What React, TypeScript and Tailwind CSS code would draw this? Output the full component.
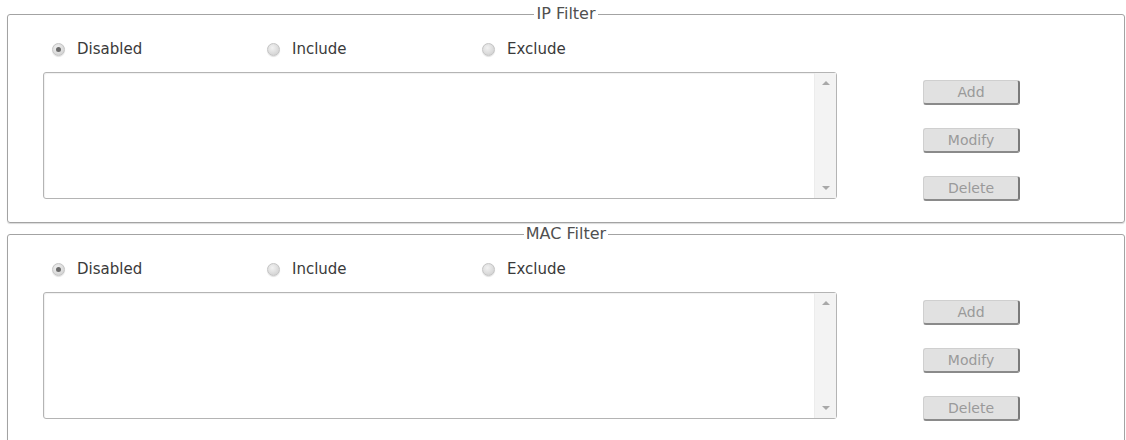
import React from 'react'

type Mode = 'disabled' | 'include' | 'exclude'

interface FilterBoxProps {
    title: string;
    mode: Mode;
    className?: string;
}

const modes: { value: Mode; label: string }[] = [
    { value: 'disabled', label: 'Disabled' },
    { value: 'include', label: 'Include' },
    { value: 'exclude', label: 'Exclude' },
];

function Radio({ checked }: { checked: boolean }) {
    return (
        <span className="w-[13px] h-[13px] rounded-full border border-[#c4c4c4] bg-[radial-gradient(circle_at_40%_35%,#f2f2f2,#cbcbcb)] shadow-[0_1px_1px_rgba(0,0,0,0.12)] flex items-center justify-center shrink-0">
            {checked && <span className="w-[5px] h-[5px] rounded-full bg-[#6a6a6a]" />}
        </span>
    );
}

function ListBox() {
    return (
        <div className="w-[794px] h-[127px] border border-[#b4b4b4] rounded-[3px] bg-white flex justify-end shadow-[inset_1px_1px_1px_rgba(0,0,0,0.06)]">
            <div className="w-[22px] h-full bg-[#f3f3f3] border-l border-[#ececec] flex flex-col items-center justify-between py-[8px]">
                <span className="w-0 h-0 border-l-[4px] border-r-[4px] border-b-[4px] border-l-transparent border-r-transparent border-b-[#a8a8a8]" />
                <span className="w-0 h-0 border-l-[4px] border-r-[4px] border-t-[4px] border-l-transparent border-r-transparent border-t-[#a8a8a8]" />
            </div>
        </div>
    );
}

function FilterButton({ label }: { label: string }) {
    return (
        <button
            type="button"
            disabled
            className="w-[97px] h-[25px] bg-[#e1e1e1] border border-[#cfcfcf] border-r-2 border-b-2 border-r-[#7a7a7a] border-b-[#8a8a8a] rounded-[3px] text-[14px] text-[#9a9a9a] leading-none"
        >
            {label}
        </button>
    );
}

function FilterBox({ title, mode, className = '' }: FilterBoxProps) {
    return (
        <fieldset className={`ml-[7px] w-[1118px] border border-[#a3a3a3] rounded-[3px] shadow-[0_1px_1px_rgba(0,0,0,0.15)] ${className}`}>
            <legend className="mx-auto px-[2px] text-[16px] leading-[18px] text-[#505050]">{title}</legend>
            <div className="flex pb-[21px]">
                <div className="pl-[35px] pt-[16px]">
                    <div className="flex pl-[9px] h-[20px] items-center">
                        {modes.map((m) => (
                            <label key={m.value} className="w-[215px] flex items-center gap-[12px] text-[15px] text-[#3a3a3a]">
                                <Radio checked={m.value === mode} />
                                {m.label}
                            </label>
                        ))}
                    </div>
                    <div className="mt-[13px]">
                        <ListBox />
                    </div>
                </div>
                <div className="ml-[86px] pt-[57px] flex flex-col gap-[23px]">
                    <FilterButton label="Add" />
                    <FilterButton label="Modify" />
                    <FilterButton label="Delete" />
                </div>
            </div>
        </fieldset>
    );
}

export default function App() {
    return (
        <div className="w-[1126px] h-[440px] overflow-hidden bg-white pt-[5px] font-['DejaVu_Sans',Verdana,sans-serif]">
            <FilterBox title="IP Filter" mode="disabled" />
            <FilterBox title="MAC Filter" mode="disabled" className="mt-[2px]" />
        </div>
    );
}
